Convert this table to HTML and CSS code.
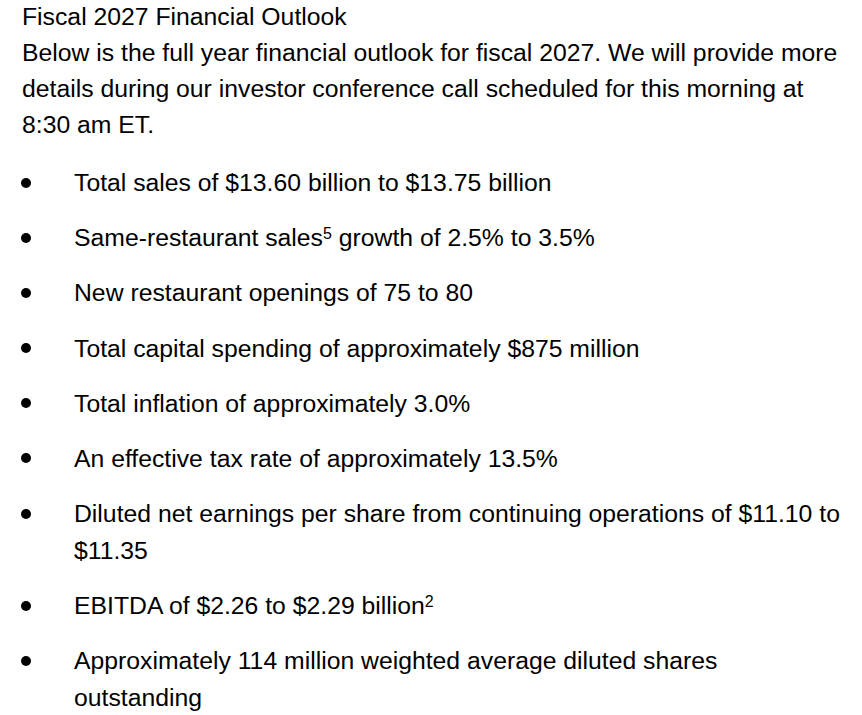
FILE: index.html
```html
<!DOCTYPE html>
<html lang="en">
<head>
<meta charset="utf-8">
<title>Fiscal 2027 Financial Outlook</title>
<link rel="stylesheet" href="styles.css">
</head>
<body>
<div class="doc">
  <div class="title">Fiscal 2027 Financial Outlook</div>
  <p class="intro">Below is the full year financial outlook for fiscal 2027. We will provide more details during our investor conference call scheduled for this morning at 8:30 am ET.</p>
  <ul class="list">
    <li class="item"><span class="dot"></span><span class="text">Total sales of $13.60 billion to $13.75 billion</span></li>
    <li class="item"><span class="dot"></span><span class="text">Same-restaurant sales<sup class="sup">5</sup> growth of 2.5% to 3.5%</span></li>
    <li class="item"><span class="dot"></span><span class="text">New restaurant openings of 75 to 80</span></li>
    <li class="item"><span class="dot"></span><span class="text">Total capital spending of approximately $875 million</span></li>
    <li class="item"><span class="dot"></span><span class="text">Total inflation of approximately 3.0%</span></li>
    <li class="item"><span class="dot"></span><span class="text">An effective tax rate of approximately 13.5%</span></li>
    <li class="item"><span class="dot"></span><span class="text">Diluted net earnings per share from continuing operations of $11.10 to $11.35</span></li>
    <li class="item"><span class="dot"></span><span class="text">EBITDA of $2.26 to $2.29 billion<sup class="sup">2</sup></span></li>
    <li class="item"><span class="dot"></span><span class="text">Approximately 114 million weighted average diluted shares outstanding</span></li>
  </ul>
</div>
</body>
</html>
```

FILE: styles.css
```css
html, body {
  margin: 0;
  padding: 0;
  background: #ffffff;
}

body {
  font-family: "Liberation Sans", Arial, sans-serif;
  font-size: 24.75px;
  color: #000000;
}

.doc {
  margin-top: -1px;
  padding-left: 22px;
  padding-right: 16px;
}

.title {
  line-height: 36px;
}

.intro {
  margin: 0;
  line-height: 36px;
}

.list {
  list-style: none;
  margin: 22px 0 0 -1px;
  padding: 0;
}

.item {
  display: grid;
  grid-template-columns: 53px 1fr;
  line-height: 36.8px;
  margin-bottom: 18.4px;
}

.dot {
  width: 10px;
  height: 10px;
  border-radius: 50%;
  background: #000000;
  margin-top: 12.5px;
}

.sup {
  font-size: 16px;
  line-height: 0;
  vertical-align: 7px;
}
```
